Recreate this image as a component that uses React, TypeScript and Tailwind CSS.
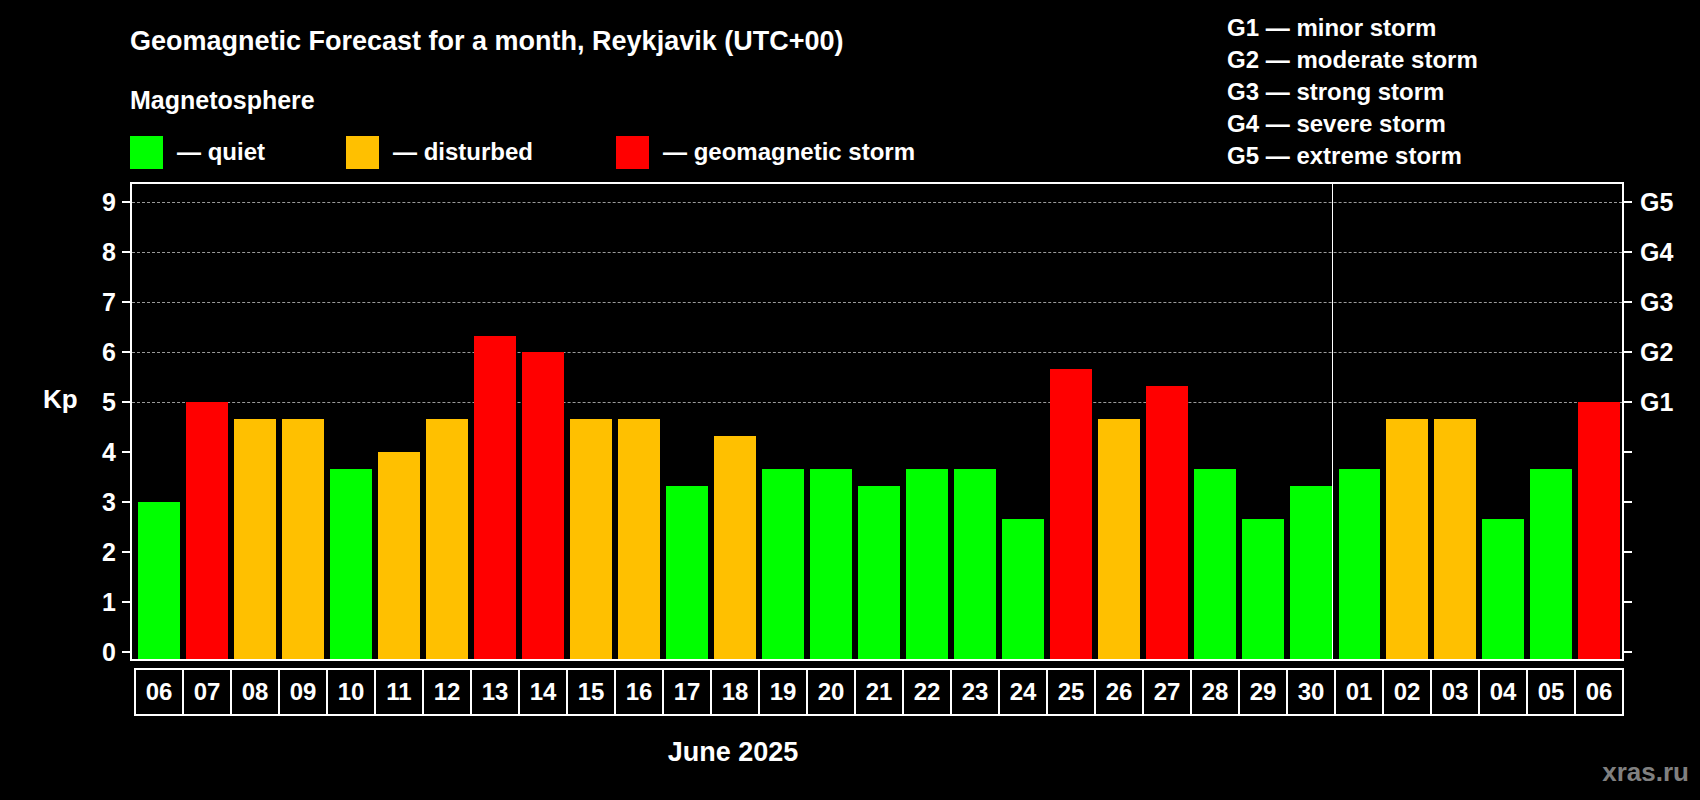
const GREEN = 'bg-[#00ff00]'
const ORANGE = 'bg-[#ffc000]'
const RED = 'bg-[#ff0000]'

const days: [string, number][] = [
  ['06', 3], ['07', 5], ['08', 4.67], ['09', 4.67], ['10', 3.67], ['11', 4], ['12', 4.67],
  ['13', 6.33], ['14', 6], ['15', 4.67], ['16', 4.67], ['17', 3.33], ['18', 4.33], ['19', 3.67],
  ['20', 3.67], ['21', 3.33], ['22', 3.67], ['23', 3.67], ['24', 2.67], ['25', 5.67], ['26', 4.67],
  ['27', 5.33], ['28', 3.67], ['29', 2.67], ['30', 3.33], ['01', 3.67], ['02', 4.67], ['03', 4.67],
  ['04', 2.67], ['05', 3.67], ['06', 5],
]

const colorFor = (kp: number) => (kp >= 5 ? RED : kp >= 4 ? ORANGE : GREEN)
const levelY = (k: number) => 468 - 50 * k

const storms = ['minor', 'moderate', 'strong', 'severe', 'extreme']

export default function App() {
  return (
    <div
      className="relative w-[1700px] h-[800px] bg-black text-white font-bold overflow-hidden"
      style={{ fontFamily: '"Liberation Sans", Arial, sans-serif' }}
    >
      {/* header */}
      <div className="flex h-[182px] pl-[130px]">
        <div className="w-[1097px] pt-[25px]">
          <div className="text-[27px] leading-[32px]">Geomagnetic Forecast for a month, Reykjavik (UTC+00)</div>
          <div className="mt-[28px] text-[25px] leading-[30px]">Magnetosphere</div>
          <div className="mt-[19px] flex items-center text-[24px]">
            <div className="w-[216px] flex items-center">
              <span className={`w-[33px] h-[33px] ${GREEN}`} />
              <span className="ml-[14px]">— quiet</span>
            </div>
            <div className="w-[270px] flex items-center">
              <span className={`w-[33px] h-[33px] ${ORANGE}`} />
              <span className="ml-[14px]">— disturbed</span>
            </div>
            <div className="flex items-center">
              <span className={`w-[33px] h-[33px] ${RED}`} />
              <span className="ml-[14px]">— geomagnetic storm</span>
            </div>
          </div>
        </div>
        <div className="pt-[12px] text-[24px] leading-[32px]">
          {storms.map((s, i) => (
            <div key={s}>G{i + 1} — {s} storm</div>
          ))}
        </div>
      </div>

      {/* plot */}
      <div className="flex">
        <div className="w-[130px] relative">
          <div className="absolute left-[43px] top-[202px] text-[26px] leading-[30px]">Kp</div>
        </div>
        <div className="relative w-[1494px] h-[479px] border-2 border-white">
          {[5, 6, 7, 8, 9].map(k => (
            <div
              key={k}
              className="absolute left-0 right-0 border-t border-dashed border-[#9a9a9a]"
              style={{ top: levelY(k) }}
            />
          ))}
          {Array.from({ length: 10 }, (_, k) => (
            <div key={k}>
              <div className="absolute left-[-10px] w-[8px] h-[2px] bg-white" style={{ top: levelY(k) - 1 }} />
              <div className="absolute right-[-10px] w-[8px] h-[2px] bg-white" style={{ top: levelY(k) - 1 }} />
              <div
                className="absolute right-full mr-[16px] text-[25px] leading-[30px]"
                style={{ top: levelY(k) - 15 }}
              >
                {k}
              </div>
              {k >= 5 && (
                <div
                  className="absolute left-full ml-[18px] text-[25px] leading-[30px]"
                  style={{ top: levelY(k) - 15 }}
                >
                  G{k - 4}
                </div>
              )}
            </div>
          ))}
          <div className="relative flex h-full items-end">
            {days.map(([d, kp], i) => (
              <div
                key={i}
                className={`w-[48px] h-full flex items-end pl-[6px] ${i === 25 ? 'border-l border-white' : ''}`}
              >
                <div className={`w-full ${colorFor(kp)}`} style={{ height: 7 + 50 * kp }} />
              </div>
            ))}
          </div>
        </div>
      </div>

      {/* dates */}
      <div className="ml-[134px] mt-[7px] w-[1490px] h-[48px] flex border-2 border-white">
        {days.map(([d], i) => (
          <div
            key={i}
            className={`flex-1 flex items-center justify-center text-[24px] ${i > 0 ? 'border-l-2 border-white' : ''}`}
          >
            {d}
          </div>
        ))}
      </div>

      <div className="mt-[20px] w-[1466px] text-center text-[27px] leading-[32px]">June 2025</div>

      <div className="absolute right-[11px] bottom-[8px] text-[26px] text-[#808080]">xras.ru</div>
    </div>
  )
}
